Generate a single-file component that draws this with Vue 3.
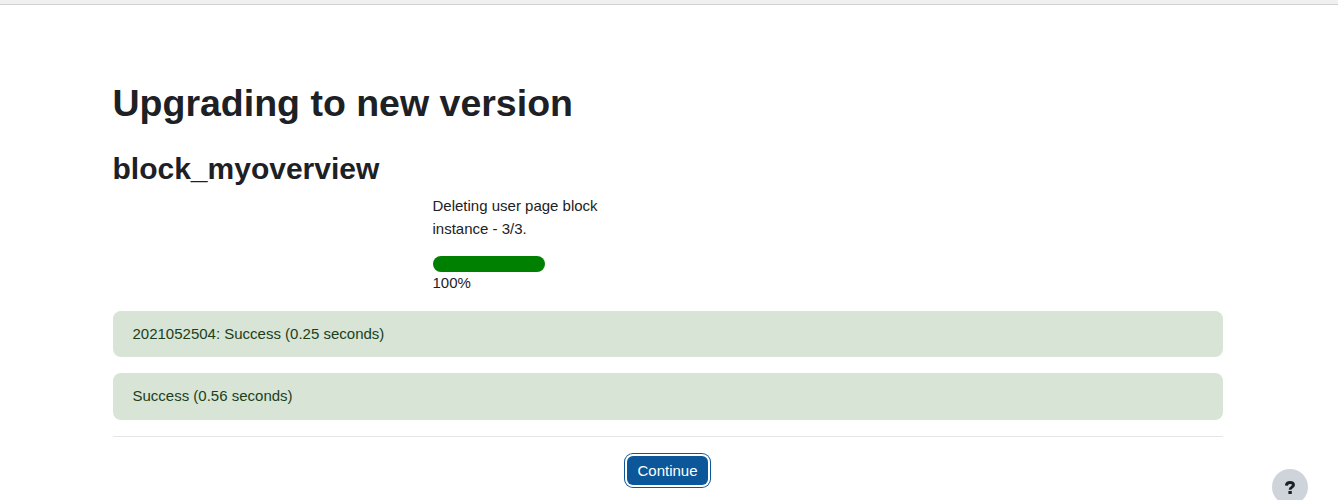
<script setup>
const results = ['2021052504: Success (0.25 seconds)', 'Success (0.56 seconds)']
</script>

<template>
  <div class="page">
    <div class="topbar"></div>
    <main class="container">
      <h1 class="title">Upgrading to new version</h1>
      <h2 class="subtitle">block_myoverview</h2>
      <div class="progress">
        <p class="message">Deleting user page block instance - 3/3.</p>
        <div class="bar"></div>
        <div class="percent">100%</div>
      </div>
      <div v-for="text in results" :key="text" class="alert">{{ text }}</div>
      <hr class="rule" />
      <div class="actions">
        <button class="continue" type="button">Continue</button>
      </div>
    </main>
    <div class="help">
      <svg class="help-icon" viewBox="0 0 10 13" width="10" height="13" aria-hidden="true">
        <path d="M1.4 4.6C1.5 2.6 3 1.5 5 1.5C7.1 1.5 8.5 2.6 8.5 4.1C8.5 6.3 5.1 6 5.1 8.8" fill="none" stroke="#1d2125" stroke-width="2.9" />
        <rect x="3.4" y="10" width="3.4" height="3" fill="#1d2125" />
      </svg>
    </div>
  </div>
</template>

<style>
html, body { margin: 0; height: 500px; overflow: hidden; background: #fff; }
</style>

<style scoped>
.page {
  position: relative;
  height: 500px;
  overflow: hidden;
  font-family: "Liberation Sans", Arial, sans-serif;
  font-size: 15px;
  line-height: 22.5px;
  color: #1d2125;
}
.topbar {
  height: 4px;
  background: #f0f0f0;
  border-bottom: 1px solid #d0d0d0;
}
.container {
  width: 1110px;
  margin-left: 112.5px;
  padding-top: 76px;
}
.title {
  margin: 0;
  font-size: 37.5px;
  line-height: 45px;
  font-weight: 700;
}
.subtitle {
  margin: 25px 0 0;
  font-size: 30px;
  line-height: 36px;
  font-weight: 700;
}
.progress {
  margin: 8px 0 0 320px;
  width: 200px;
}
.message { margin: 0; }
.bar {
  width: 112px;
  height: 16px;
  margin-top: 16px;
  border-radius: 8px;
  background: #008000;
}
.alert {
  margin-top: 16px;
  padding: 12px 20px;
  height: 22.5px;
  background: #d7e4d6;
  color: #1c3f1a;
  border-radius: 8px;
}
.rule {
  margin: 16px 0 0;
  border: 0;
  border-top: 1px solid #e5e5e5;
}
.actions {
  display: flex;
  justify-content: center;
  margin-top: 19px;
}
.continue {
  height: 29px;
  padding: 0 10.5px;
  border: 0;
  border-radius: 6px;
  background: #0c5799;
  box-shadow: 0 0 0 2px #fff, 0 0 0 3px #0c5799;
  color: #fff;
  font: 15px/29px "Liberation Sans", Arial, sans-serif;
}
.help {
  position: absolute;
  left: 1272px;
  top: 469px;
  width: 36px;
  height: 36px;
  border-radius: 50%;
  background: #ced4da;
  display: flex;
  align-items: center;
  justify-content: center;
}
</style>
